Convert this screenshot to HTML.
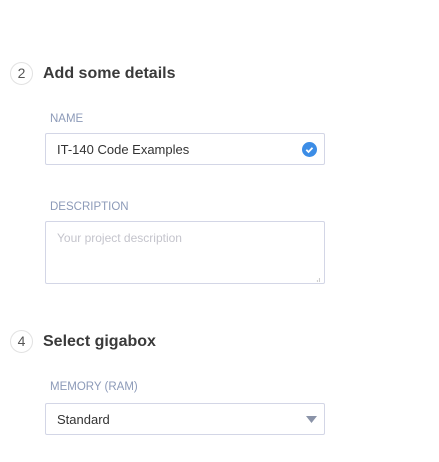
<!DOCTYPE html>
<html><head><style>
body{margin:0;width:439px;height:462px;background:#fff;font-family:"Liberation Sans",sans-serif;position:relative;overflow:hidden}
.c{position:absolute;left:10px;width:21px;height:21px;border:1px solid #e2e2e2;border-radius:50%;text-align:center;line-height:21px;font-size:14px;color:#555}
.h{position:absolute;left:43px;font-size:16px;font-weight:bold;color:#3a3a3a}
.l{position:absolute;left:50px;font-size:11.5px;color:#8c9ab8}
.b{position:absolute;left:45px;width:278px;border:1px solid #d3d6e6;border-radius:2px;box-sizing:content-box}
.t{position:absolute;left:11px;font-size:13px;color:#333}
</style></head><body>
<div class="c" style="top:62px">2</div>
<div class="h" style="top:65px">Add some details</div>
<div class="l" style="top:113px">NAME</div>
<div class="b" style="top:133px;height:30px"><span class="t" style="top:8px">IT-140 Code Examples</span>
<svg style="position:absolute;left:256px;top:8px" width="15" height="15"><circle cx="7.5" cy="7.5" r="7.5" fill="#3c8de6"/><path d="M4.3 7.8l2.2 2.2 4-4.2" stroke="#fff" stroke-width="1.8" fill="none"/></svg></div>
<div class="l" style="top:201px">DESCRIPTION</div>
<div class="b" style="top:221px;height:61px"><span class="t" style="top:9px;font-size:12px;color:#c4c4cc">Your project description</span>
<span style="position:absolute;right:3px;bottom:1px;font-size:7px;color:#999">⣠</span></div>
<div class="c" style="top:330px">4</div>
<div class="h" style="top:333px">Select gigabox</div>
<div class="l" style="top:381px">MEMORY (RAM)</div>
<div class="b" style="top:403px;height:30px"><span class="t" style="top:8px">Standard</span>
<svg style="position:absolute;left:260px;top:12px" width="11" height="7"><path d="M0 0h11l-5.5 7z" fill="#8a93a8"/></svg></div>
</body></html>
